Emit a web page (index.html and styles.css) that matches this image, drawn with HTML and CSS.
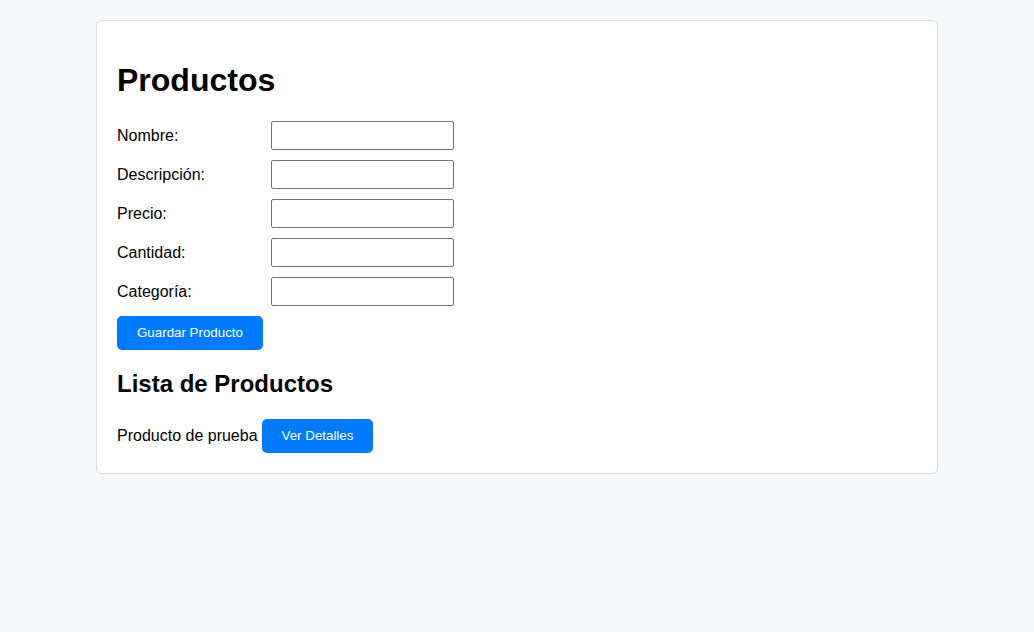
FILE: index.html
```html
<!DOCTYPE html>
<html lang="es">
<head>
<meta charset="utf-8">
<title>Productos</title>
<link rel="stylesheet" href="styles.css">
</head>
<body>
<div class="container">
  <h1 class="title">Productos</h1>
  <form class="product-form">
    <div class="form-group">
      <label class="form-label" for="nombre">Nombre:</label>
      <input class="form-input" type="text" id="nombre">
    </div>
    <div class="form-group">
      <label class="form-label" for="descripcion">Descripción:</label>
      <input class="form-input" type="text" id="descripcion">
    </div>
    <div class="form-group">
      <label class="form-label" for="precio">Precio:</label>
      <input class="form-input" type="text" id="precio">
    </div>
    <div class="form-group">
      <label class="form-label" for="cantidad">Cantidad:</label>
      <input class="form-input" type="text" id="cantidad">
    </div>
    <div class="form-group">
      <label class="form-label" for="categoria">Categoría:</label>
      <input class="form-input" type="text" id="categoria">
    </div>
    <button class="btn" type="button">Guardar Producto</button>
  </form>
  <h2 class="subtitle">Lista de Productos</h2>
  <div class="product-list">
    <div class="product-item"><span class="product-name">Producto de prueba</span><button class="btn" type="button">Ver Detalles</button></div>
  </div>
</div>
</body>
</html>
```

FILE: styles.css
```css
html, body {
  margin: 0;
  padding: 0;
}
body {
  background: #f8f9fa;
  font-family: "Liberation Sans", Arial, sans-serif;
  font-size: 16px;
  color: #000;
  padding: 20px;
}
.container {
  max-width: 800px;
  margin: 0 auto;
  padding: 20px;
  background: #fff;
  border: 1px solid #ddd;
  border-radius: 5px;
}
.title {
  font-size: 32px;
  font-weight: bold;
  margin: 21px 0 22px;
  line-height: 37px;
}
.form-group {
  display: flex;
  align-items: center;
  margin-bottom: 10px;
}
.form-label {
  width: 154px;
  flex: none;
}
.form-input {
  box-sizing: border-box;
  width: 183px;
  height: 29px;
  padding: 5px;
  border: 1px solid #767676;
  border-radius: 2px;
  font-family: "Liberation Sans", Arial, sans-serif;
  font-size: 13.33px;
  margin: 0;
}
.btn {
  display: inline-block;
  box-sizing: border-box;
  height: 34px;
  padding: 0 20px;
  background: #007bff;
  color: #fff;
  border: none;
  border-radius: 5px;
  font-family: "Liberation Sans", Arial, sans-serif;
  font-size: 13.33px;
  line-height: 34px;
  cursor: pointer;
  vertical-align: middle;
}
.subtitle {
  font-size: 24px;
  font-weight: bold;
  margin: 20px 0 21px;
  line-height: 28px;
}
.product-item {
  display: flex;
  align-items: center;
  gap: 4px;
}
```
